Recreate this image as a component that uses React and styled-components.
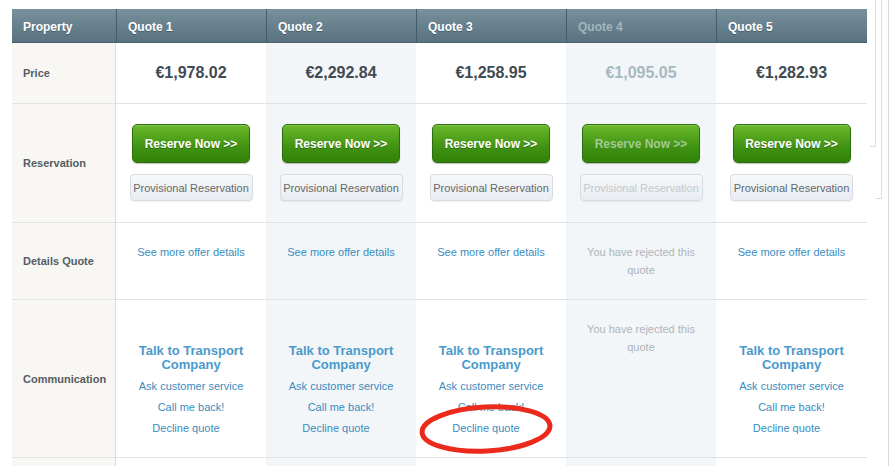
import React from "react";
import styled, { createGlobalStyle } from "styled-components";

const GlobalStyle = createGlobalStyle`
  html, body {
    margin: 0;
    padding: 0;
    background: #ffffff;
    font-family: "Liberation Sans", Arial, sans-serif;
  }
`;

const Page = styled.div`
  position: relative;
  width: 889px;
  height: 466px;
  overflow: hidden;
  padding: 9px 0 0 12px;
  box-sizing: border-box;
  border-right: 1px solid #d6d9db;
`;

const Grid = styled.div`
  display: grid;
  grid-template-columns: 104px 150px 150px 150px 150px 151px;
  grid-template-rows: 34px 61px 119px 77px 158px 40px;
  width: 855px;
`;

const HeadCell = styled.div`
  display: flex;
  align-items: center;
  padding: 2px 0 0 11px;
  font-size: 12px;
  font-weight: bold;
  color: ${(p) => (p.$faded ? "#a3b4bd" : "#ffffff")};
  background: linear-gradient(#78909c, #587280);
  border-left: ${(p) => (p.$first ? "none" : "1px solid #445d6a")};
  border-bottom: 1px solid #4b6370;
  text-shadow: ${(p) => (p.$faded ? "none" : "0 1px 0 rgba(0,0,0,0.25)")};
`;

const bgFor = (p) => {
  if (p.$label) return "#f8f7f4";
  if (p.$shade) return "#f2f6f9";
  return "#ffffff";
};

const Cell = styled.div`
  background: ${bgFor};
  border-bottom: 1px solid #dfe2e4;
  border-right: ${(p) => (p.$label ? "1px solid #d9dbdc" : "none")};
  display: flex;
  flex-direction: column;
  align-items: ${(p) => (p.$label ? "flex-start" : "center")};
  justify-content: ${(p) => (p.$label || p.$middle ? "center" : "flex-start")};
  padding: ${(p) => (p.$label ? "0 0 0 11px" : `${p.$top || 0}px 0 0`)};
  box-sizing: border-box;
  position: relative;
`;

const Label = styled.span`
  font-size: 11px;
  font-weight: bold;
  color: #555d62;
`;

const Price = styled.span`
  font-size: 16px;
  font-weight: bold;
  color: ${(p) => (p.$faded ? "#aab8c0" : "#414b52")};
`;

const ReserveButton = styled.button`
  width: 118px;
  height: 39px;
  border: 1px solid #2c6e0c;
  border-radius: 5px;
  background: linear-gradient(#6bb82a, #3f9212 60%, #318208);
  box-shadow: 0 1px 1px rgba(0,0,0,0.25), inset 0 1px 0 rgba(255,255,255,0.2);
  font-family: inherit;
  font-size: 12px;
  font-weight: bold;
  color: ${(p) => (p.$faded ? "#a2c995" : "#ffffff")};
  text-shadow: ${(p) => (p.$faded ? "none" : "0 1px 0 rgba(0,0,0,0.3)")};
  cursor: pointer;
  padding: 0;
`;

const ProvisionalButton = styled.button`
  margin-top: 11px;
  width: 123px;
  height: 27px;
  border: 1px solid #d7dce0;
  border-radius: 4px;
  background: linear-gradient(#f6f8fa, #e9edf1);
  box-shadow: 0 1px 1px rgba(0,0,0,0.06);
  font-family: inherit;
  font-size: 11px;
  color: ${(p) => (p.$faded ? "#c3c9cd" : "#62696e")};
  padding: 0;
  cursor: pointer;
`;

const Link = styled.a`
  font-size: 11px;
  color: #3a8cbf;
  text-decoration: none;
  line-height: ${(p) => (p.$tight ? "18px" : "21px")};
  margin-right: ${(p) => p.$shift || 0}px;
`;

const Muted = styled.p`
  margin: 0;
  width: 112px;
  text-align: center;
  font-size: 11px;
  line-height: 18px;
  color: #aeb4b8;
`;

const Title = styled.a`
  font-size: 13px;
  font-weight: bold;
  line-height: 14px;
  color: #4a9acb;
  text-align: center;
  margin-bottom: 4px;
  text-decoration: none;
`;

const Circle = styled.svg`
  position: absolute;
  left: 418px;
  top: 402px;
  pointer-events: none;
`;

const EdgeLine = styled.div`
  position: absolute;
  top: 0;
  left: ${(p) => p.$x}px;
  height: ${(p) => p.$h}px;
  width: 5px;
  border-right: 1px solid #dcdfe1;
  border-bottom: 1px solid #dcdfe1;
`;

const quotes = [
  { name: "Quote 1", price: "€1,978.02" },
  { name: "Quote 2", price: "€2,292.84", shade: true },
  { name: "Quote 3", price: "€1,258.95" },
  { name: "Quote 4", price: "€1,095.05", shade: true, rejected: true },
  { name: "Quote 5", price: "€1,282.93" },
];

const App = () => {
  return (
    <>
      <GlobalStyle />
      <Page>
        <Grid>
          <HeadCell $first>Property</HeadCell>
          {quotes.map((q) => (
            <HeadCell key={q.name} $faded={q.rejected}>
              {q.name}
            </HeadCell>
          ))}

          <Cell $label>
            <Label>Price</Label>
          </Cell>
          {quotes.map((q) => (
            <Cell key={q.name} $shade={q.shade} $middle>
              <Price $faded={q.rejected}>{q.price}</Price>
            </Cell>
          ))}

          <Cell $label>
            <Label>Reservation</Label>
          </Cell>
          {quotes.map((q) => (
            <Cell key={q.name} $shade={q.shade} $top={20}>
              <ReserveButton $faded={q.rejected}>Reserve Now &gt;&gt;</ReserveButton>
              <ProvisionalButton $faded={q.rejected}>Provisional Reservation</ProvisionalButton>
            </Cell>
          ))}

          <Cell $label>
            <Label>Details Quote</Label>
          </Cell>
          {quotes.map((q) => (
            <Cell key={q.name} $shade={q.shade} $top={20}>
              {q.rejected ? (
                <Muted>You have rejected this quote</Muted>
              ) : (
                <Link href="#" $tight>See more offer details</Link>
              )}
            </Cell>
          ))}

          <Cell $label>
            <Label>Communication</Label>
          </Cell>
          {quotes.map((q) => (
            <Cell key={q.name} $shade={q.shade} $top={q.rejected ? 20 : 44}>
              {q.rejected ? (
                <Muted>You have rejected this quote</Muted>
              ) : (
                <>
                  <Title href="#">
                    Talk to Transport
                    <br />
                    Company
                  </Title>
                  <Link href="#">Ask customer service</Link>
                  <Link href="#">Call me back!</Link>
                  <Link href="#" $shift={10}>Decline quote</Link>
                </>
              )}
            </Cell>
          ))}

          <Cell $label />
          {quotes.map((q) => (
            <Cell key={q.name} $shade={q.shade} />
          ))}
        </Grid>

        <Circle width="140" height="54" viewBox="0 0 140 54">
          <ellipse
            cx="68"
            cy="27"
            rx="64"
            ry="22"
            fill="none"
            stroke="#ec2a1c"
            strokeWidth="5"
            transform="rotate(-3 68 27)"
          />
        </Circle>
        <EdgeLine $x={870} $h={146} />
        <EdgeLine $x={876} $h={198} />
      </Page>
    </>
  );
};

export default App;
